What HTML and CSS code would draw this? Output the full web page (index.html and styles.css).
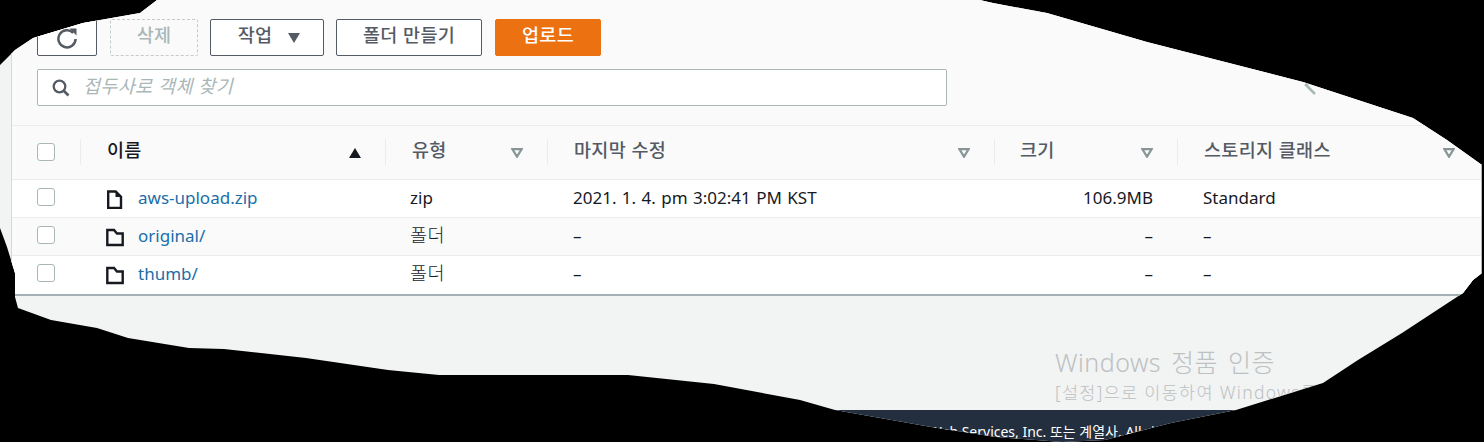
FILE: index.html
```html
<!DOCTYPE html>
<html lang="ko">
<head>
<meta charset="utf-8">
<title>S3</title>
<link rel="stylesheet" href="styles.css">
</head>
<body>
<div class="page">
  <div class="frame">
    <main class="panel">
      <div class="toolbar">
        <button class="btn btn-icon" type="button" aria-label="새로 고침">
          <svg width="22" height="22" viewBox="0 0 22 22"><path d="M17.2 5.800A8.600 8.600 0 1 0 19.600 12" fill="none" stroke="#545b64" stroke-width="2.500"/><path d="M13.500 1.500h7v7z" fill="#545b64"/></svg>
        </button>
        <button class="btn btn-disabled" type="button">삭제</button>
        <button class="btn btn-actions" type="button">작업<span class="caret"></span></button>
        <button class="btn btn-folder" type="button">폴더 만들기</button>
        <button class="btn btn-primary" type="button">업로드</button>
      </div>
      <div class="search-row">
        <div class="search">
          <svg width="18" height="18" viewBox="0 0 18 18"><circle cx="7.500" cy="7.500" r="5.800" fill="none" stroke="#545b64" stroke-width="2.300"/><path d="M11.500 11.500l5 5" stroke="#545b64" stroke-width="2.600"/></svg>
          <span class="placeholder">접두사로 객체 찾기</span>
        </div>
        <svg class="pager" width="12" height="20" viewBox="0 0 12 20"><path d="M11 1L2 10l9 9" fill="none" stroke="#aab7b8" stroke-width="2.500"/></svg>
      </div>
      <div class="table">
        <div class="row head">
          <div class="cell c-check"><span class="check"></span></div>
          <div class="cell c-name sep"><span>이름</span><span class="sort-up"></span></div>
          <div class="cell c-type sep"><span>유형</span><svg class="sort" width="12" height="10" viewBox="0 0 12 10"><path d="M1.300 1.100h9.400L6 8.700z" fill="none" stroke="#879596" stroke-width="2.200"/></svg></div>
          <div class="cell c-date sep"><span>마지막 수정</span><svg class="sort" width="12" height="10" viewBox="0 0 12 10"><path d="M1.300 1.100h9.400L6 8.700z" fill="none" stroke="#879596" stroke-width="2.200"/></svg></div>
          <div class="cell c-size sep"><span>크기</span><svg class="sort" width="12" height="10" viewBox="0 0 12 10"><path d="M1.300 1.100h9.400L6 8.700z" fill="none" stroke="#879596" stroke-width="2.200"/></svg></div>
          <div class="cell c-class sep"><span>스토리지 클래스</span><svg class="sort" width="12" height="10" viewBox="0 0 12 10"><path d="M1.300 1.100h9.400L6 8.700z" fill="none" stroke="#879596" stroke-width="2.200"/></svg></div>
        </div>
        <div class="row item">
          <div class="cell c-check"><span class="check"></span></div>
          <div class="cell c-name">
            <svg class="obj" width="18" height="20" viewBox="0 0 18 20"><path d="M2.200 2.500h7.500l5.300 5.300V19H2.200z" fill="none" stroke="#16191f" stroke-width="2.400"/><path d="M9.500 2.500v5.500h5.500z" fill="#16191f"/></svg>
            <a class="link" href="#">aws-upload.zip</a>
          </div>
          <div class="cell c-type">zip</div>
          <div class="cell c-date date">2021. 1. 4. pm 3:02:41 PM KST</div>
          <div class="cell c-size num">106.9MB</div>
          <div class="cell c-class">Standard</div>
        </div>
        <div class="row item alt">
          <div class="cell c-check"><span class="check"></span></div>
          <div class="cell c-name">
            <svg class="obj" width="18" height="20" viewBox="0 0 18 20"><path d="M1.300 3H8l3 3.500h5.700V18H1.300z" fill="none" stroke="#16191f" stroke-width="2.400"/></svg>
            <a class="link" href="#">original/</a>
          </div>
          <div class="cell c-type ko">폴더</div>
          <div class="cell c-date">–</div>
          <div class="cell c-size num">–</div>
          <div class="cell c-class">–</div>
        </div>
        <div class="row item">
          <div class="cell c-check"><span class="check"></span></div>
          <div class="cell c-name">
            <svg class="obj" width="18" height="20" viewBox="0 0 18 20"><path d="M1.300 3H8l3 3.500h5.700V18H1.300z" fill="none" stroke="#16191f" stroke-width="2.400"/></svg>
            <a class="link" href="#">thumb/</a>
          </div>
          <div class="cell c-type ko">폴더</div>
          <div class="cell c-date">–</div>
          <div class="cell c-size num">–</div>
          <div class="cell c-class">–</div>
        </div>
      </div>
    </main>
    <div class="spacer"></div>
    <footer class="footer">© 2008 - 2021, Amazon Web Services, Inc. 또는 계열사. All rights reserved.</footer>
    <div class="watermark">
      <div class="wm-title">Windows 정품 인증</div>
      <div class="wm-sub">[설정]으로 이동하여 Windows를 정품 인증합니다.</div>
    </div>
  </div>
</div>
</body>
</html>
```
FILE: styles.css
```css
* { box-sizing: border-box; }
html, body { margin: 0; padding: 0; background: #000; }
.page {
  width: 1484px;
  height: 442px;
  overflow: hidden;
  background: #000;
}
.frame {
  position: relative;
  display: flex;
  flex-direction: column;
  width: 1484px;
  height: 442px;
  padding-left: 11px;
  background: #f2f3f3;
  font-family: "Noto Sans", "Noto Sans CJK KR", sans-serif;
  clip-path: polygon(0 65px, 15px 50px, 33px 38px, 83px 23px, 140px 13px, 157px 0, 980px 0, 993px 3px, 1047px 13px, 1147px 42px, 1303px 82px, 1413px 118px, 1447px 140px, 1482px 165px, 1482px 273px, 1473px 280px, 1463px 293px, 1402px 333px, 1358px 360px, 1323px 383px, 1310px 387px, 1236px 410px, 1171px 423px, 1105px 440px, 1062px 442px, 996px 437px, 931px 427px, 835px 410px, 800px 400px, 714px 384px, 628px 375px, 439px 375px, 388px 370px, 306px 358px, 224px 349px, 189px 348px, 128px 338px, 97px 328px, 51px 320px, 18px 308px, 15px 297px, 15px 273px, 7px 247px, 0 228px);
}
.panel {
  width: 1471px;
  height: 296px;
  flex: none;
  background: #fafafa;
  border-left: 1px solid #d5dbdb;
  border-right: 1px solid #aab7b8;
  border-bottom: 2px solid #a3b0b5;
  display: flex;
  flex-direction: column;
}
.toolbar {
  display: flex;
  flex: none;
  gap: 12px;
  height: 69px;
  padding: 19px 0 0 25px;
}
.btn {
  height: 37px;
  border: 1px solid #545b64;
  border-radius: 2px;
  background: #fff;
  color: #545b64;
  font: 500 18.500px/1 "Noto Sans CJK KR", sans-serif;
  letter-spacing: .3px;
  display: flex;
  align-items: center;
  justify-content: center;
  padding: 0 0 7px;
}
.btn-icon { width: 60px; padding: 0; }
.btn-disabled {
  width: 88px;
  margin-left: 1px;
  color: #aab7b8;
  background: #fafafa;
  border: 1px dashed #c4cbcc;
}
.btn-actions { width: 114px; gap: 16px; padding-left: 4px; }
.btn-folder { width: 146px; }
.btn-primary {
  width: 106px;
  margin-left: 1px;
  background: #ec7211;
  border-color: #ec7211;
  color: #fff;
}
.caret {
  width: 0;
  height: 0;
  margin-top: 7px;
  border-left: 6.500px solid transparent;
  border-right: 6.500px solid transparent;
  border-top: 10px solid #545b64;
}
.search-row {
  display: flex;
  flex: none;
  align-items: center;
  height: 37px;
  padding-left: 25px;
}
.search {
  width: 910px;
  height: 37px;
  background: #fff;
  border: 1px solid #aab7b8;
  border-radius: 2px;
  display: flex;
  align-items: center;
  gap: 13px;
  padding-left: 14px;
}
.placeholder {
  font: italic 400 18.500px/1 "Noto Sans CJK KR", sans-serif;
  letter-spacing: .35px;
  color: #aab7b8;
  padding-bottom: 5px;
}
.pager { margin: -5px 0 0 357px; flex: none; }
.table { flex: none; margin-top: 19px; border-top: 1px solid #eaeded; }
.row { display: flex; align-items: center; }
.head {
  height: 54px;
  color: #545b64;
  font: 500 18.500px/1 "Noto Sans CJK KR", sans-serif;
  letter-spacing: .3px;
  padding-bottom: 2px;
  border-bottom: 1px solid #eaeded;
}
.item {
  height: 38px;
  background: #fff;
  color: #16191f;
  font: 400 17px/1 "Noto Sans", "Noto Sans CJK KR", sans-serif;
  border-bottom: 1px solid #eaeded;
  padding-bottom: 3px;
}
.item:last-child { border-bottom: 0; padding-bottom: 4px; }
.alt { background: #fafafa; }
.cell { display: flex; align-items: center; flex: none; }
.c-check { width: 68px; padding-left: 25px; }
.c-name { width: 305px; padding-left: 26px; }
.c-type { width: 162px; padding-left: 25px; }
.c-date { width: 447px; padding-left: 26px; }
.c-size { width: 183px; padding-left: 25px; }
.c-class { width: 304px; padding-left: 26px; }
.head .cell { height: 26px; justify-content: space-between; padding-right: 24px; }
.head .c-check { justify-content: flex-start; }
.head .c-name { color: #16191f; }
.head .c-type { padding-left: 26px; }
.head .c-class { padding-right: 26px; }
.sep { border-left: 1px solid #eaeded; }
.sep > span:first-child { padding-bottom: 5px; }
.sort { flex: none; margin-top: 3px; }
.sort-up {
  width: 0;
  height: 0;
  margin-top: 3px;
  border-left: 6px solid transparent;
  border-right: 6px solid transparent;
  border-bottom: 10px solid #16191f;
}
.check {
  width: 18px;
  height: 18px;
  background: #fff;
  border: 1px solid #aab7b8;
  border-radius: 3px;
  display: block;
}
.obj { flex: none; margin: 3px 14px 0 0; }
.link { color: #1b6ea8; text-decoration: none; }
.date { word-spacing: 1px; }
.ko { font: 300 18.500px/1 "Noto Sans CJK KR", sans-serif; letter-spacing: .4px; padding-bottom: 1px; }
.item .c-size { padding-left: 0; padding-right: 24px; justify-content: flex-end; }
.spacer { flex: 1; }
.footer {
  height: 32px;
  flex: none;
  margin-left: -11px;
  background: #232f3e;
  color: #fff;
  font: 400 14px/16px "Noto Sans", "Noto Sans CJK KR", sans-serif;
  padding: 14px 0 0 773px;
  white-space: nowrap;
}
.watermark {
  position: absolute;
  left: 1055px;
  top: 346px;
  color: #bcc1c2;
  white-space: nowrap;
  font-family: "Noto Sans", "Noto Sans CJK KR", sans-serif;
  font-weight: 300;
}
.wm-title { font-size: 25px; line-height: 32px; word-spacing: 3px; letter-spacing: .5px; }
.wm-sub { font-size: 17.500px; line-height: 28px; letter-spacing: 1.300px; }
```
